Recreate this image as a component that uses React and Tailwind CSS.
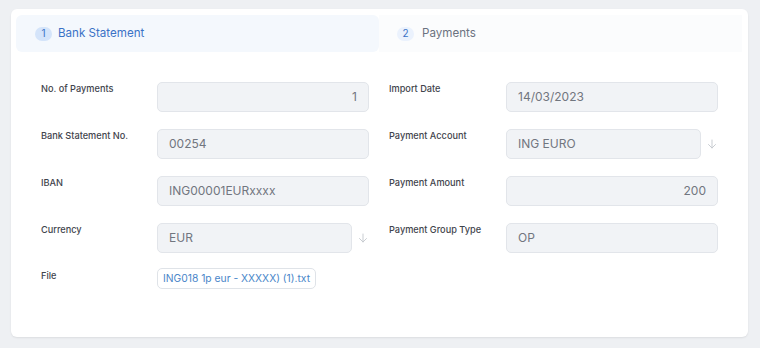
import React from "react";

const ArrowDown = () => (
  <svg width="12" height="12" viewBox="0 0 24 24" fill="none" stroke="#c3c7cd" strokeWidth="1.8" strokeLinecap="round" strokeLinejoin="round">
    <path d="M12 4v16" />
    <path d="M5 13l7 7 7-7" />
  </svg>
);

function Field({ value, align = "left", select = false }) {
  return (
    <div className="flex items-center flex-1">
      <div
        className={
          "h-[30px] flex-1 rounded-[5px] border border-[#e2e5ea] bg-[#f1f3f6] px-[11px] flex items-center text-[12px] text-[#71767f] " +
          (align === "right" ? "justify-end" : "justify-start")
        }
      >
        {value}
      </div>
      {select && (
        <div className="w-[17px] flex justify-end items-center">
          <ArrowDown />
        </div>
      )}
    </div>
  );
}

function Row({ label, labelW, children }) {
  return (
    <div className="flex items-start">
      <div
        className="text-[9.2px] font-medium leading-[14px] text-[#3f444c] shrink-0"
        style={{ width: labelW }}
      >
        {label}
      </div>
      {children}
    </div>
  );
}

export default function App() {
  return (
    <div
      className="w-[760px] h-[348px] bg-[#eef0f3] pt-[9px] pl-[11px] pr-[12px]"
      style={{ fontFamily: "Inter, 'Noto Sans', sans-serif" }}
    >
      <div className="h-[328px] bg-white rounded-[6px] shadow-[0_1px_2px_rgba(0,0,0,0.08)] pt-[6px] pl-[5px] pr-[6px]">
        <div className="flex">
          <div className="w-[363px] h-[37px] rounded-[6px] bg-[#f4f8fd] flex items-center pl-[19px]">
            <span className="w-[17px] h-[14px] rounded-full bg-[#d4e4fa] text-[#3a72c6] text-[10px] flex items-center justify-center">
              1
            </span>
            <span className="ml-[6px] text-[11.6px] text-[#3a72c6]">Bank Statement</span>
          </div>
          <div className="flex-1 h-[37px] bg-[#fbfcfd] flex items-center pl-[18px]">
            <span className="w-[17px] h-[14px] rounded-full bg-[#ebf2fd] text-[#3a72c6] text-[10px] flex items-center justify-center">
              2
            </span>
            <span className="ml-[8px] text-[11.6px] text-[#6b7280]">Payments</span>
          </div>
        </div>
        <div className="ml-[25px] mr-[24px] mt-[30px] grid grid-cols-[328px_329px] gap-x-[20px]">
          <div className="flex flex-col gap-[17px]">
            <Row label="No. of Payments" labelW={116}>
              <Field value="1" align="right" />
            </Row>
            <Row label="Bank Statement No." labelW={116}>
              <Field value="00254" />
            </Row>
            <Row label="IBAN" labelW={116}>
              <Field value="ING00001EURxxxx" />
            </Row>
            <Row label="Currency" labelW={116}>
              <Field value="EUR" select />
            </Row>
            <div className="flex items-start -mt-[2px]">
              <div className="w-[116px] text-[9.2px] font-medium leading-[14px] text-[#3f444c] pt-[1px]">File</div>
              <div className="h-[21px] px-[5px] flex items-center rounded-[5px] border border-[#dfe3e8] bg-white text-[10.3px] text-[#4a86c9]">
                ING018 1p eur - XXXXX) (1).txt
              </div>
            </div>
          </div>
          <div className="flex flex-col gap-[17px]">
            <Row label="Import Date" labelW={117}>
              <Field value="14/03/2023" />
            </Row>
            <Row label="Payment Account" labelW={117}>
              <Field value="ING EURO" select />
            </Row>
            <Row label="Payment Amount" labelW={117}>
              <Field value="200" align="right" />
            </Row>
            <Row label="Payment Group Type" labelW={117}>
              <Field value="OP" />
            </Row>
          </div>
        </div>
      </div>
    </div>
  );
}
